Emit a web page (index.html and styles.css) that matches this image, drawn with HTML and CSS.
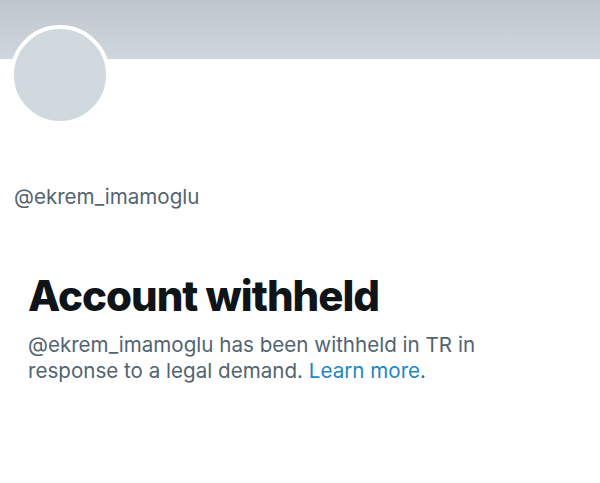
FILE: index.html
```html
<!DOCTYPE html>
<html>
<head>
<meta charset="utf-8">
<link rel="stylesheet" href="styles.css">
</head>
<body>
<div class="page">
  <div class="banner"></div>
  <div class="profile">
    <div class="avatar"></div>
    <div class="handle">@ekrem_imamoglu</div>
  </div>
  <div class="notice">
    <h1 class="title">Account withheld</h1>
    <p class="message">@ekrem_imamoglu has been withheld in TR in response to a legal demand. <a class="link" href="#">Learn more</a>.</p>
  </div>
</div>
</body>
</html>
```
FILE: styles.css
```css
html, body {
  margin: 0;
  padding: 0;
  background: #ffffff;
}
.page {
  width: 600px;
  height: 483px;
  overflow: hidden;
  font-family: Inter, "Noto Sans", sans-serif;
}
.banner {
  height: 59px;
  background: linear-gradient(180deg, #bec5cc 0%, #d0d7dc 100%);
}
.profile {
  padding-left: 10px;
}
.avatar {
  width: 92px;
  height: 92px;
  margin-top: -34px;
  border-radius: 50%;
  background: #cfd9de;
  border: 4px solid #ffffff;
}
.handle {
  margin-top: 60px;
  padding-left: 4px;
  font-size: 20.6px;
  line-height: 24px;
  color: #536471;
}
.notice {
  padding: 61px 28px 0 28px;
}
.title {
  margin: 0;
  font-size: 42px;
  line-height: 52px;
  font-weight: 800;
  letter-spacing: -1px;
  color: #0f1419;
}
.message {
  margin: 10px 0 0 0;
  width: 470px;
  font-size: 20.6px;
  line-height: 26px;
  color: #536471;
}
.link {
  color: #1d87c8;
  text-decoration: none;
}
```
